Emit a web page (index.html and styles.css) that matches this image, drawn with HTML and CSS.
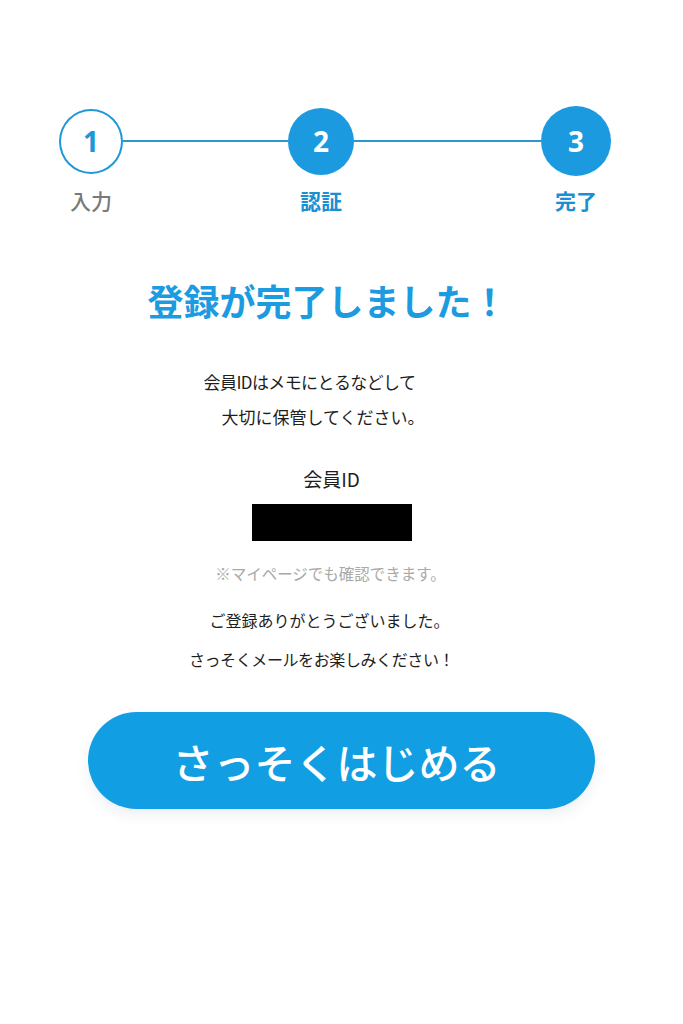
FILE: index.html
```html
<!DOCTYPE html>
<html lang="ja">
<head>
<meta charset="utf-8">
<title>登録完了</title>
<link rel="stylesheet" href="styles.css">
</head>
<body>
<main class="page">
  <div class="stepper">
    <div class="circle c1 outline">1</div>
    <div class="line l1"></div>
    <div class="circle c2 filled">2</div>
    <div class="line l2"></div>
    <div class="circle c3 filled">3</div>
    <div class="label lb1 muted">入力</div>
    <div class="label lb2 active">認証</div>
    <div class="label lb3 active">完了</div>
  </div>

  <section class="content">
    <h1 class="title">登録が完了しました！</h1>
    <p class="note"><span class="l-a">会員IDはメモにとるなどして</span><span class="l-b">大切に保管してください。</span></p>
    <p class="id-label">会員ID</p>
    <div class="id-box"></div>
    <p class="sub">※マイページでも確認できます。</p>
    <p class="thanks"><span class="l-c">ご登録ありがとうございました。</span><span class="l-d">さっそくメールをお楽しみください！</span></p>
  </section>

  <div class="cta-wrap">
    <button class="cta">さっそくはじめる</button>
  </div>
</main>
</body>
</html>
```

FILE: styles.css
```css
* { box-sizing: border-box; }
html, body { margin: 0; padding: 0; background: #ffffff; }
body {
  font-family: "Noto Sans CJK JP", "Noto Sans", sans-serif;
  color: #1e1e1e;
  width: 683px;
  min-height: 1024px;
}
.page { padding-top: 106px; }

.stepper {
  display: grid;
  grid-template-columns: 64px 165px 66px 187px 70px;
  grid-template-rows: 70px 24px;
  row-gap: 12px;
  margin-left: 59px;
  align-items: center;
}
.circle {
  border-radius: 50%;
  display: flex;
  align-items: center;
  justify-content: center;
  font-family: "Open Sans", "Noto Sans", sans-serif;
  font-weight: 700;
  font-size: 28px;
  justify-self: center;
}
.c1 { width: 64px; height: 65px; grid-column: 1; grid-row: 1; }
.c2 { width: 66px; height: 67px; grid-column: 3; grid-row: 1; }
.c3 { width: 70px; height: 70px; grid-column: 5; grid-row: 1; }
.outline { border: 2px solid #1d98d8; color: #1d98d8; background: #fff; }
.filled { background: #1b9ae0; color: #fff; }
.line { height: 2px; background: #2a96d2; grid-row: 1; }
.l1 { grid-column: 2; }
.l2 { grid-column: 4; }

.label {
  grid-row: 2;
  justify-self: center;
  white-space: nowrap;
  font-size: 21px;
  line-height: 24px;
}
.lb1 { grid-column: 1; }
.lb2 { grid-column: 3; }
.lb3 { grid-column: 5; }
.muted { color: #7a7a7a; font-weight: 500; }
.active { color: #1a8fd2; font-weight: 700; }

.content {
  display: flex;
  flex-direction: column;
  align-items: center;
  text-align: center;
  padding-right: 30px;
  margin-top: 66px;
}
.title {
  margin: 0 0 0 2px;
  font-size: 36px;
  line-height: 44px;
  font-weight: 700;
  color: #1d9be0;
  letter-spacing: 0;
}
.note {
  margin: 42px 0 0;
  font-size: 17px;
  line-height: 35px;
  color: #1e1e1e;
  display: flex;
  flex-direction: column;
  align-items: center;
}
.l-a { margin-right: 34px; letter-spacing: -0.6px; }
.l-b { margin-right: 7px; }
.id-label {
  margin: 33px 0 0 10px;
  font-size: 19px;
  line-height: 24px;
  color: #1e1e1e;
}
.id-box {
  margin: 13px 0 0 10px;
  width: 160px;
  height: 37px;
  background: #000;
}
.sub {
  margin: 20px 0 0;
  font-size: 15.5px;
  line-height: 24px;
  color: #a9a9a9;
  padding-left: 8px;
}
.thanks {
  margin: 16px 0 0;
  font-size: 16px;
  line-height: 39px;
  color: #1e1e1e;
  display: flex;
  flex-direction: column;
  align-items: center;
}
.l-c { margin-left: 6px; }
.l-d { margin-right: 10px; letter-spacing: -0.4px; }

.cta-wrap {
  display: flex;
  justify-content: flex-start;
  padding-left: 88px;
  margin-top: 33px;
}
.cta {
  width: 507px;
  height: 97px;
  border: none;
  border-radius: 49px;
  background: #119ee3;
  color: #fff;
  font-family: "Noto Sans CJK JP", "Noto Sans", sans-serif;
  font-size: 41px;
  font-weight: 500;
  box-shadow: 0 6px 14px rgba(0, 60, 110, 0.08);
  padding: 0 10px 0 0;
  cursor: pointer;
}
```
